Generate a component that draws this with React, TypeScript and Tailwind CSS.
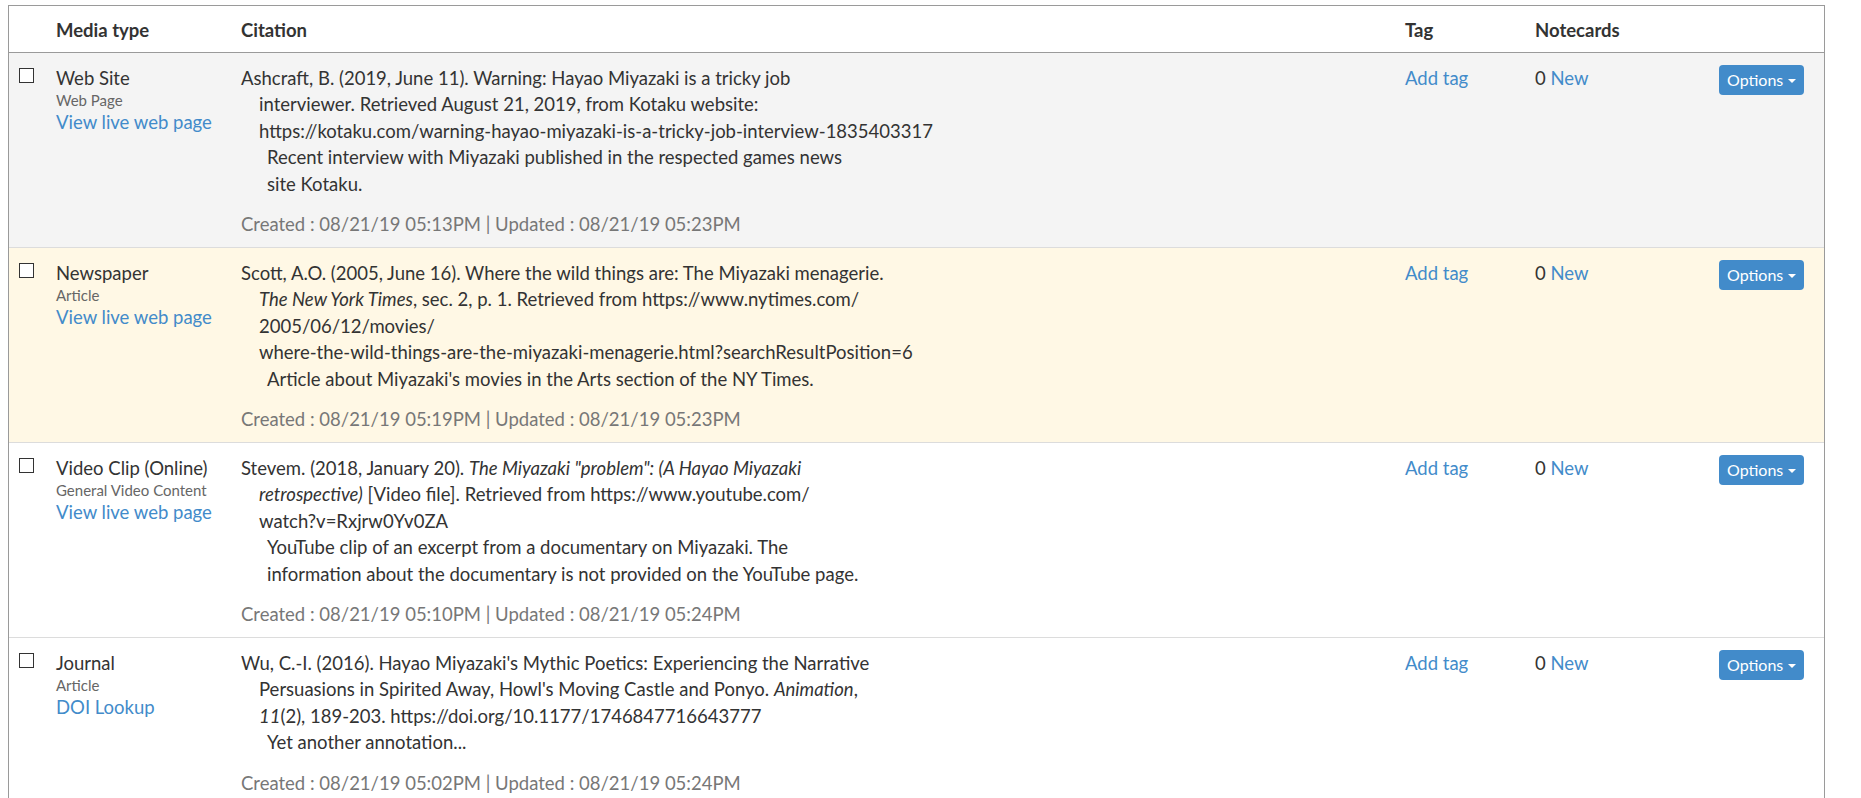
import React from 'react';

type Row = {
  type: string;
  sub: string;
  link: string;
  bg: string;
  citation: React.ReactNode[];
  annotation: string[];
  created: string;
  updated: string;
};

const rows: Row[] = [
  {
    type: 'Web Site',
    sub: 'Web Page',
    link: 'View live web page',
    bg: 'bg-[#f4f4f4]',
    citation: [
      'Ashcraft, B. (2019, June 11). Warning: Hayao Miyazaki is a tricky job',
      'interviewer. Retrieved August 21, 2019, from Kotaku website:',
      'https://kotaku.com/warning-hayao-miyazaki-is-a-tricky-job-interview-1835403317',
    ],
    annotation: [
      'Recent interview with Miyazaki published in the respected games news',
      'site Kotaku.',
    ],
    created: '08/21/19 05:13PM',
    updated: '08/21/19 05:23PM',
  },
  {
    type: 'Newspaper',
    sub: 'Article',
    link: 'View live web page',
    bg: 'bg-[#fff8e5]',
    citation: [
      'Scott, A.O. (2005, June 16). Where the wild things are: The Miyazaki menagerie.',
      <>
        <i>The New York Times</i>, sec. 2, p. 1. Retrieved from https://www.nytimes.com/
      </>,
      '2005/06/12/movies/',
      'where-the-wild-things-are-the-miyazaki-menagerie.html?searchResultPosition=6',
    ],
    annotation: ["Article about Miyazaki's movies in the Arts section of the NY Times."],
    created: '08/21/19 05:19PM',
    updated: '08/21/19 05:23PM',
  },
  {
    type: 'Video Clip (Online)',
    sub: 'General Video Content',
    link: 'View live web page',
    bg: 'bg-white',
    citation: [
      <>
        Stevem. (2018, January 20). <i>The Miyazaki "problem": (A Hayao Miyazaki</i>
      </>,
      <>
        <i>retrospective)</i> [Video file]. Retrieved from https://www.youtube.com/
      </>,
      'watch?v=Rxjrw0Yv0ZA',
    ],
    annotation: [
      'YouTube clip of an excerpt from a documentary on Miyazaki. The',
      'information about the documentary is not provided on the YouTube page.',
    ],
    created: '08/21/19 05:10PM',
    updated: '08/21/19 05:24PM',
  },
  {
    type: 'Journal',
    sub: 'Article',
    link: 'DOI Lookup',
    bg: 'bg-white',
    citation: [
      "Wu, C.-I. (2016). Hayao Miyazaki's Mythic Poetics: Experiencing the Narrative",
      <>
        Persuasions in Spirited Away, Howl's Moving Castle and Ponyo. <i>Animation</i>,
      </>,
      <>
        <i>11</i>(2), 189-203. https://doi.org/10.1177/1746847716643777
      </>,
    ],
    annotation: ['Yet another annotation...'],
    created: '08/21/19 05:02PM',
    updated: '08/21/19 05:24PM',
  },
];

const cols = 'grid grid-cols-[39px_185px_1164px_130px_184px_113px]';

function OptionsButton() {
  return (
    <button className="flex items-center gap-[5px] h-[30px] px-[8px] rounded-[4px] bg-[#428bca] text-white text-[16px] leading-none">
      Options
      <span className="w-0 h-0 border-l-[4px] border-r-[4px] border-t-[4px] border-l-transparent border-r-transparent border-t-white mt-[2px]" />
    </button>
  );
}

export default function App() {
  return (
    <div className="min-h-screen bg-white font-['Lato','Open_Sans',sans-serif] text-[18.5px] leading-[26.5px] text-[#333]">
      <div className="ml-[8px] mt-[5px] w-[1817px] border-x border-t border-[#9a9a9a]">
        {/* header */}
        <div className={`${cols} border-b border-[#9a9a9a] pt-[11px] pb-[8px] font-bold`}>
          <div />
          <div className="px-[8px]">Media type</div>
          <div className="px-[8px]">Citation</div>
          <div className="px-[8px]">Tag</div>
          <div className="px-[8px]">Notecards</div>
          <div />
        </div>

        {rows.map((r, i) => (
          <div key={i} className={`${cols} ${r.bg} border-b border-[#dcdcdc] pt-[12px] pb-[9px]`}>
            <div className="pl-[10px] pt-[3px]">
              <input
                type="checkbox"
                className="appearance-none block w-[15px] h-[15px] border border-[#333] bg-white m-0"
              />
            </div>
            <div className="px-[8px]">
              <div>{r.type}</div>
              <div className="text-[15px] leading-[18px] text-[#666]">{r.sub}</div>
              <div className="text-[#428bca]">{r.link}</div>
            </div>
            <div className="px-[8px]">
              <div className="whitespace-nowrap">
                {r.citation.map((line, j) => (
                  <div key={j} className={j === 0 ? '' : 'pl-[18px]'}>
                    {line}
                  </div>
                ))}
                {r.annotation.map((line, j) => (
                  <div key={j} className="pl-[26px]">
                    {line}
                  </div>
                ))}
              </div>
              <div className="mt-[14px] text-[#777]">
                Created : {r.created} | Updated : {r.updated}
              </div>
            </div>
            <div className="px-[8px] text-[#428bca]">Add tag</div>
            <div className="px-[8px]">
              0 <span className="text-[#428bca]">New</span>
            </div>
            <div className="px-[8px]">
              <OptionsButton />
            </div>
          </div>
        ))}
      </div>
    </div>
  );
}
